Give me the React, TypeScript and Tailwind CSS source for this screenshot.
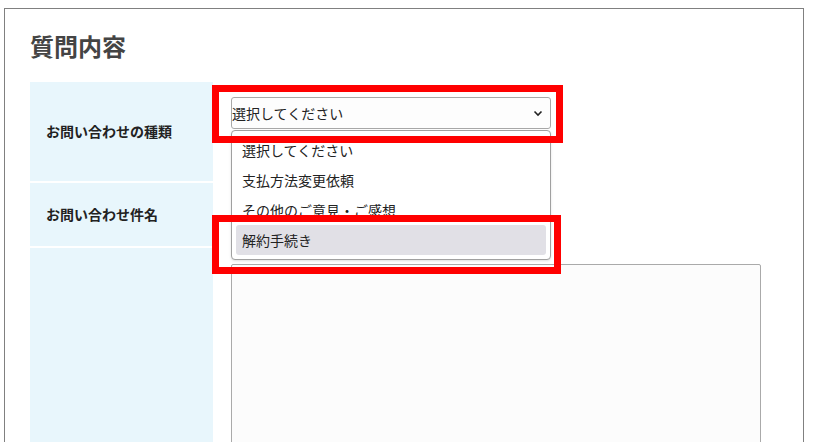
import React from "react";

const font = { fontFamily: '"Noto Sans CJK JP", "Noto Sans", sans-serif' };

export default function App() {
  return (
    <div
      className="relative w-[820px] h-[442px] overflow-hidden bg-white text-[#222]"
      style={font}
    >
      <div className="ml-[4px] mt-[8px] w-[800px] min-h-[520px] border border-[#808080] px-[25px] pt-[25px]">
        <h2 className="text-[24px] leading-[24px] font-bold text-[#444]">質問内容</h2>
        <div className="mt-[24px] flex flex-col gap-[2px]">
          <div className="grid grid-cols-[183px_1fr] h-[99px]">
            <div className="bg-[#e8f6fc] flex items-center pl-[16px] text-[14px] font-bold">
              お問い合わせの種類
            </div>
            <div className="pl-[18px] pt-[15px]">
              <div className="relative w-[320px]">
                <div className="h-[32px] flex items-center justify-between border border-[#a8a8a8] rounded-[3px] bg-[#fdfdfd] pl-0 pr-[6px] text-[14px]">
                  <span>選択してください</span>
                  <svg width="10" height="10" viewBox="0 0 10 10" className="mr-[1px]">
                    <path d="M1.5 3.5 L5 7 L8.5 3.5" fill="none" stroke="#222" strokeWidth="1.6" />
                  </svg>
                </div>
                <div className="absolute z-10 left-0 top-[33px] w-[320px] h-[130px] border border-[#a0a0a0] rounded-[4px] bg-white shadow-sm p-[4px] text-[14px]">
                  <div className="h-[30px] flex items-center pl-[6px]">選択してください</div>
                  <div className="h-[30px] flex items-center pl-[6px]">支払方法変更依頼</div>
                  <div className="h-[30px] flex items-center pl-[6px]">その他のご意見・ご感想</div>
                  <div className="h-[30px] flex items-center pl-[6px] bg-[#e1e0e6] rounded-[3px]">解約手続き</div>
                </div>
              </div>
            </div>
          </div>
          <div className="grid grid-cols-[183px_1fr] h-[63px]">
            <div className="bg-[#e8f6fc] flex items-center pl-[16px] text-[14px] font-bold">
              お問い合わせ件名
            </div>
            <div />
          </div>
          <div className="grid grid-cols-[183px_1fr] h-[300px]">
            <div className="bg-[#e8f6fc]" />
            <div className="pl-[18px] pt-[16px]">
              <div className="w-[530px] h-[260px] border border-[#aaaaaa] rounded-[2px] bg-[#fcfcfc]" />
            </div>
          </div>
        </div>
      </div>
      <div className="absolute z-20 left-[212px] top-[85px] w-[351px] h-[58px] border-[7px] border-[#ff0000]" />
      <div className="absolute z-20 left-[212px] top-[215px] w-[349px] h-[59px] border-[7px] border-[#ff0000]" />
    </div>
  );
}
